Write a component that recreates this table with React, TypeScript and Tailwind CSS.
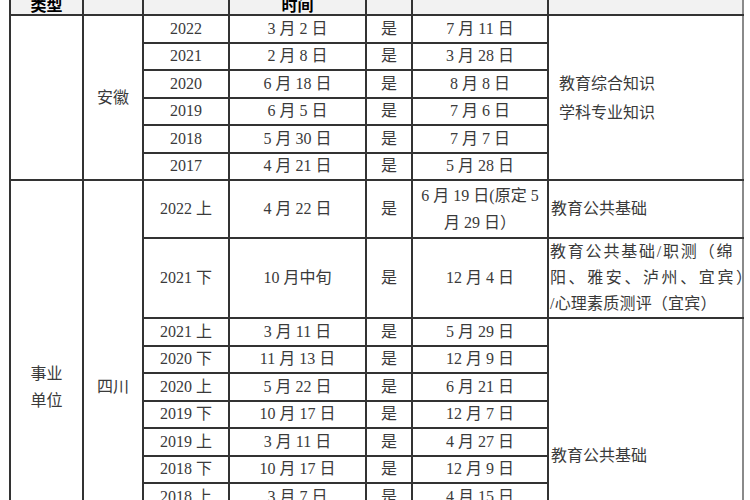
const anhui = [
  ["2022", "3 月 2 日", "7 月 11 日"],
  ["2021", "2 月 8 日", "3 月 28 日"],
  ["2020", "6 月 18 日", "8 月 8 日"],
  ["2019", "6 月 5 日", "7 月 6 日"],
  ["2018", "5 月 30 日", "7 月 7 日"],
  ["2017", "4 月 21 日", "5 月 28 日"],
];

const sichuan = [
  ["2021 上", "3 月 11 日", "5 月 29 日"],
  ["2020 下", "11 月 13 日", "12 月 9 日"],
  ["2020 上", "5 月 22 日", "6 月 21 日"],
  ["2019 下", "10 月 17 日", "12 月 7 日"],
  ["2019 上", "3 月 11 日", "4 月 27 日"],
  ["2018 下", "10 月 17 日", "12 月 9 日"],
  ["2018 上", "3 月 7 日", "4 月 15 日"],
  ["2017 下", "10 月 21 日", "12 月 2 日"],
  ["2017 上", "4 月 22 日", "5 月 27 日"],
  ["2016 下", "10 月 29 日", "12 月 3 日"],
];

const cell = "border-2 border-[#333] p-0 text-center align-middle";
const head = "border-2 border-[#333] p-0 text-center";

export default function App() {
  return (
    <div className="h-[500px] w-[750px] overflow-hidden bg-white">
      <table
        className="-mt-[32px] ml-[9px] w-[733px] table-fixed border-collapse text-[16px] leading-[20px] text-[#3a3a3a]"
        style={{ fontFamily: '"Liberation Serif", "Noto Sans CJK SC", serif' }}
      >
        <colgroup>
          <col className="w-[73px]" />
          <col className="w-[60px]" />
          <col className="w-[86px]" />
          <col className="w-[137px]" />
          <col className="w-[46px]" />
          <col className="w-[136px]" />
          <col className="w-[195px]" />
        </colgroup>
        <thead>
          <tr className="h-[46px] bg-[#f2f2f2]">
            <th className={`${head} align-bottom font-bold leading-[16px] text-black`}>类型</th>
            <th className={`${head} align-middle font-normal text-[#aaa]`}>省份</th>
            <th className={`${head} align-middle font-normal text-[#aaa]`}>年份</th>
            <th className={`${head} align-bottom font-bold leading-[16px] text-black`}>时间</th>
            <th className={`${head} align-middle font-normal text-[#aaa]`}>笔试</th>
            <th className={`${head} align-middle font-normal text-[#aaa]`}>成绩查询</th>
            <th className={`${head} align-middle border-r-[#8a8a8a] font-normal text-[#aaa]`}>考试科目</th>
          </tr>
        </thead>
        <tbody>
          {anhui.map(([year, exam, score], i) => (
            <tr key={year} className="h-[27.5px]">
              {i === 0 && (
                <>
                  <td rowSpan={6} className={cell}></td>
                  <td rowSpan={6} className={cell}>
                    安徽
                  </td>
                </>
              )}
              <td className={cell}>{year}</td>
              <td className={cell}>{exam}</td>
              <td className={cell}>是</td>
              <td className={cell}>{score}</td>
              {i === 0 && (
                <td rowSpan={6} className={`${cell} border-r-[#8a8a8a] pl-[10px] text-left leading-[29px]`}>
                  教育综合知识
                  <br />
                  学科专业知识
                </td>
              )}
            </tr>
          ))}

          <tr className="h-[58px]">
            <td rowSpan={12} className={`${cell} leading-[27px]`}>
              事业
              <br />
              单位
            </td>
            <td rowSpan={12} className={cell}>
              四川
            </td>
            <td className={cell}>2022 上</td>
            <td className={cell}>4 月 22 日</td>
            <td className={cell}>是</td>
            <td className={`${cell} leading-[27px] whitespace-nowrap`}>
              6 月 19 日(原定 5
              <br />
              月 29 日）
            </td>
            <td className={`${cell} border-r-[#8a8a8a] pl-[2px] text-left`}>教育公共基础</td>
          </tr>

          <tr className="h-[80px]">
            <td className={cell}>2021 下</td>
            <td className={cell}>10 月中旬</td>
            <td className={cell}>是</td>
            <td className={cell}>12 月 4 日</td>
            <td className={`${cell} border-r-[#8a8a8a] pl-[1px] text-left leading-[26px] whitespace-nowrap`}>
              <div className="tracking-[1.8px]">教育公共基础/职测（绵</div>
              <div className="tracking-[2.6px]">阳、雅安、泸州、宜宾）</div>
              <div className="tracking-[0.2px]">/心理素质测评（宜宾）</div>
            </td>
          </tr>

          {sichuan.map(([year, exam, score], i) => (
            <tr key={year} className="h-[27.5px]">
              <td className={cell}>{year}</td>
              <td className={cell}>{exam}</td>
              <td className={cell}>是</td>
              <td className={cell}>{score}</td>
              {i === 0 && (
                <td rowSpan={10} className={`${cell} border-r-[#8a8a8a] pl-[2px] text-left`}>
                  教育公共基础
                </td>
              )}
            </tr>
          ))}
        </tbody>
      </table>
    </div>
  );
}
